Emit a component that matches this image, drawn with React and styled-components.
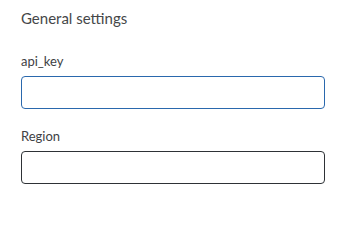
import React from 'react';
import styled, { createGlobalStyle } from 'styled-components';

const GlobalStyle = createGlobalStyle`
    body {
        margin: 0;
        background: #ffffff;
        font-family: Lato, "Open Sans", sans-serif;
    }
`;

const App = () => {
    return (
        <>
            <GlobalStyle />
            <Panel>
                <Title>General settings</Title>
                <Field>
                    <Label htmlFor='api_key'>api_key</Label>
                    <Input id='api_key' focused />
                </Field>
                <Field>
                    <Label htmlFor='region'>Region</Label>
                    <Input id='region' />
                </Field>
            </Panel>
        </>
    );
};

const Panel = styled.div`
    width: 304px;
    padding: 8px 21px 0;
    display: flex;
    flex-direction: column;
`;

const Title = styled.div`
    font-size: 15px;
    line-height: 20px;
    color: #454749;
    margin-bottom: 24px;
`;

const Field = styled.div`
    display: flex;
    flex-direction: column;
    gap: 6px;
    margin-bottom: 18px;
`;

const Label = styled.label`
    font-size: 13px;
    line-height: 18px;
    color: #3e4144;
`;

const Input = styled.input`
    box-sizing: border-box;
    width: 100%;
    height: 33px;
    border: 1px solid ${(p) => (p.focused ? '#2a68ad' : '#2e3236')};
    border-radius: 4px;
    background: #ffffff;
    outline: none;
    padding: 0 8px;
    font-family: inherit;
`;

export default App;
